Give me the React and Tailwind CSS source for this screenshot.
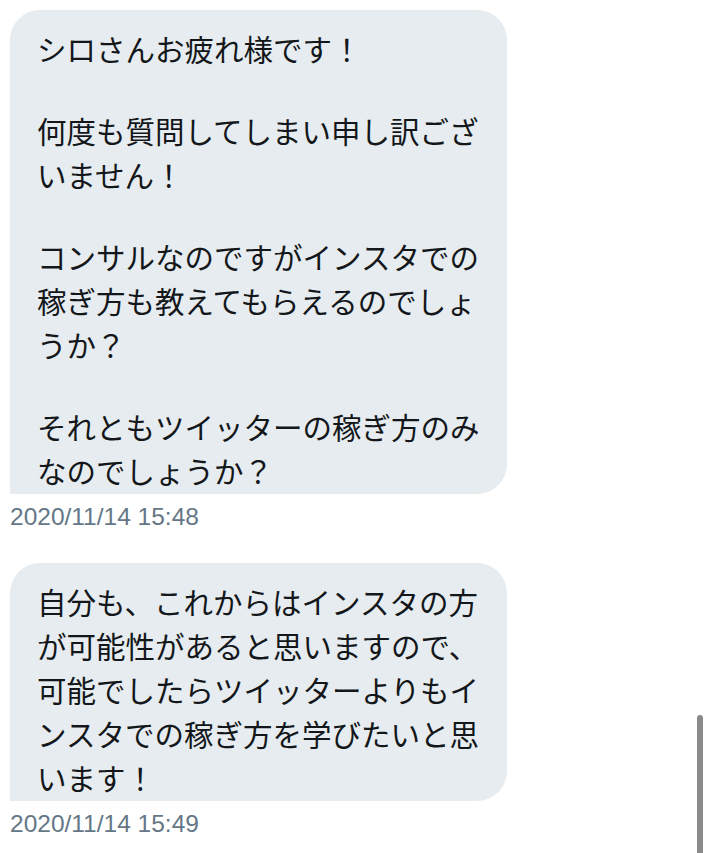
import React from "react";

const cjk = { fontFamily: '"Noto Sans CJK JP", "Noto Sans", sans-serif' };

function Bubble({ paragraphs }) {
  return (
    <div
      className="w-[497px] rounded-[30px] rounded-bl-none bg-[#e6ecf0] pl-[27px] pr-[10px] pt-[16px] pb-[2px] text-[29.5px] leading-[44px] text-[#14171a]"
      style={cjk}
    >
      {paragraphs.map((lines, i) => (
        <div key={i} className={i > 0 ? "mt-[38px]" : ""}>
          {lines.map((l, j) => (
            <div key={j} className="whitespace-nowrap">
              {l}
            </div>
          ))}
        </div>
      ))}
    </div>
  );
}

function Stamp({ children }) {
  return (
    <div
      className="mt-[8px] text-[24.5px] leading-[30px] text-[#657786]"
      style={{ fontFamily: '"Liberation Sans", Arial, sans-serif' }}
    >
      {children}
    </div>
  );
}

export default function App() {
  return (
    <div className="relative w-[709px] h-[853px] overflow-hidden bg-white">
      <div className="flex flex-col pl-[10px] pt-[10px]">
        <Bubble
          paragraphs={[
            ["シロさんお疲れ様です！"],
            ["何度も質問してしまい申し訳ござ", "いません！"],
            ["コンサルなのですがインスタでの", "稼ぎ方も教えてもらえるのでしょ", "うか？"],
            ["それともツイッターの稼ぎ方のみ", "なのでしょうか？"],
          ]}
        />
        <Stamp>2020/11/14 15:48</Stamp>
        <div className="mt-[31px]">
          <Bubble
            paragraphs={[
              [
                "自分も、これからはインスタの方",
                "が可能性があると思いますので、",
                "可能でしたらツイッターよりもイ",
                "ンスタでの稼ぎ方を学びたいと思",
                "います！",
              ],
            ]}
          />
        </div>
        <Stamp>2020/11/14 15:49</Stamp>
      </div>
      <div className="absolute left-[697px] top-[715px] w-[6px] h-[150px] rounded-t-[3px] bg-[#8a8a8a]" />
    </div>
  );
}
